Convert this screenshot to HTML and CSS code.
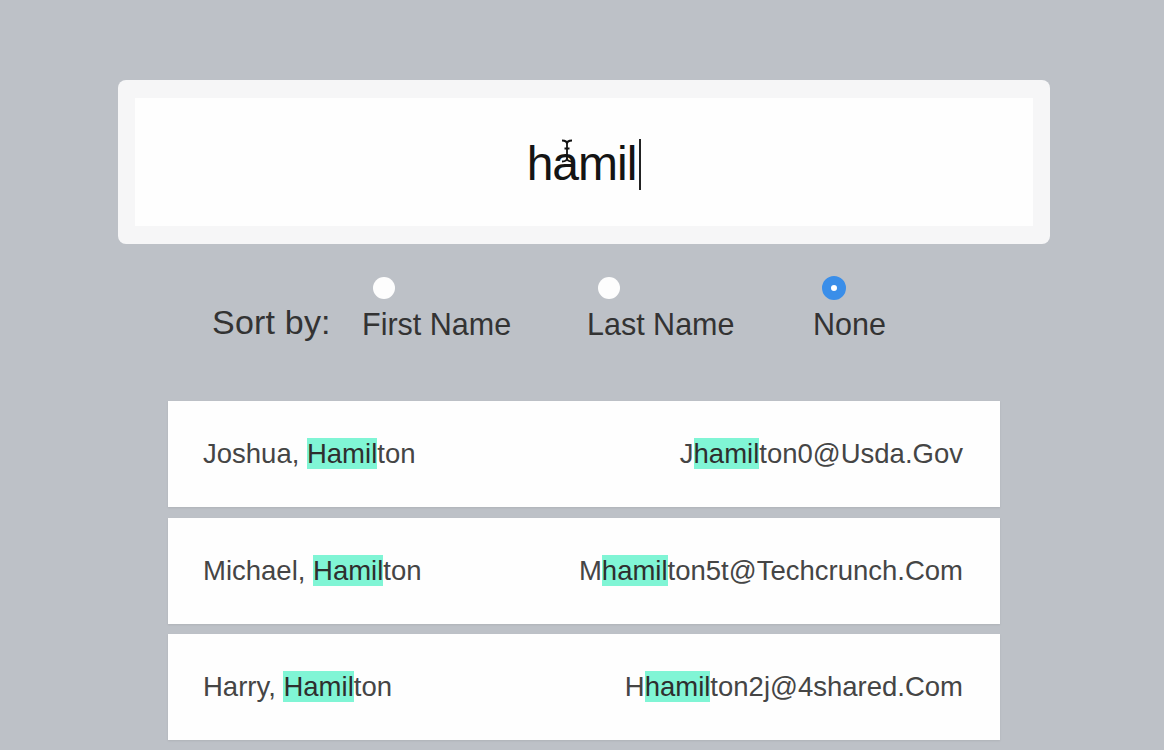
FILE: index.html
```html
<!DOCTYPE html>
<html lang="en">
<head>
<meta charset="utf-8">
<title>Contact search</title>
<link rel="stylesheet" href="styles.css">
</head>
<body>
<div class="page">
  <div class="search-card">
    <div class="search-field">
      <span class="query">hamil</span><span class="caret"></span>
      <svg class="ibeam" width="14" height="24" viewBox="0 0 14 24" aria-hidden="true">
        <path d="M2 1.5 C5 1.5 7 2.8 7 5 C7 2.8 9 1.5 12 1.5 M7 5 V19 M2 22.5 C5 22.5 7 21.2 7 19 C7 21.2 9 22.5 12 22.5 M4.5 9.5 H9.5" fill="none" stroke="#111" stroke-width="1.8"/>
      </svg>
    </div>
  </div>

  <div class="sort-row">
    <div class="sort-label">Sort by:</div>
    <div class="sort-option">
      <span class="radio"></span>
      <span class="option-label">First Name</span>
    </div>
    <div class="sort-option">
      <span class="radio"></span>
      <span class="option-label">Last Name</span>
    </div>
    <div class="sort-option">
      <span class="radio radio-checked"></span>
      <span class="option-label">None</span>
    </div>
  </div>

  <div class="results">
    <div class="result-row">
      <span class="name">Joshua, <mark class="hl">Hamil</mark>ton</span>
      <span class="email">J<mark class="hl">hamil</mark>ton0@Usda.Gov</span>
    </div>
    <div class="result-row">
      <span class="name">Michael, <mark class="hl">Hamil</mark>ton</span>
      <span class="email">M<mark class="hl">hamil</mark>ton5t@Techcrunch.Com</span>
    </div>
    <div class="result-row">
      <span class="name">Harry, <mark class="hl">Hamil</mark>ton</span>
      <span class="email">H<mark class="hl">hamil</mark>ton2j@4shared.Com</span>
    </div>
  </div>
</div>
</body>
</html>
```

FILE: styles.css
```css
html, body {
  margin: 0;
  padding: 0;
}

body {
  background: #bdc1c7;
  font-family: "Liberation Sans", Arial, Helvetica, sans-serif;
  color: #222;
  width: 1164px;
  height: 750px;
  overflow: hidden;
}

.page {
  display: flex;
  flex-direction: column;
  padding-top: 80px;
}

.search-card {
  margin-left: 118px;
  width: 932px;
  height: 164px;
  box-sizing: border-box;
  padding: 18px 17px;
  background: #f6f6f7;
  border-radius: 8px;
}

.search-field {
  position: relative;
  height: 128px;
  background: #fefefe;
  display: flex;
  align-items: center;
  justify-content: center;
}

.query {
  font-size: 48px;
  letter-spacing: -1px;
  color: #141414;
  line-height: 1;
  padding-top: 4px;
}

.caret {
  display: inline-block;
  width: 2px;
  height: 51px;
  background: #222;
  margin-left: 3px;
  margin-top: 4px;
}

.ibeam {
  position: absolute;
  left: 425px;
  top: 41px;
}

.sort-row {
  margin-top: 33px;
  margin-left: 212px;
  display: grid;
  grid-template-columns: 150px 225px 226px auto;
  align-items: end;
  color: #333;
}

.sort-label {
  font-size: 34px;
  line-height: 34px;
  letter-spacing: 0.2px;
}

.sort-option {
  display: flex;
  flex-direction: column;
  align-items: flex-start;
  gap: 10px;
}

.radio {
  display: block;
  width: 22px;
  height: 22px;
  margin-left: 11px;
  border-radius: 50%;
  background: #fdfdfd;
  box-sizing: border-box;
}

.radio-checked {
  width: 24px;
  height: 24px;
  margin-left: 9px;
  margin-bottom: -1px;
  margin-top: -1px;
  background: #fff;
  border: 9px solid #3a8ee9;
}

.option-label {
  font-size: 30.5px;
  line-height: 30px;
}

.results {
  margin-top: 62px;
  margin-left: 168px;
  width: 832px;
  display: flex;
  flex-direction: column;
  gap: 10.5px;
}

.result-row {
  height: 106px;
  box-sizing: border-box;
  padding: 0 37px 0 35px;
  background: #fefefe;
  box-shadow: 0 1px 2px rgba(0, 0, 0, 0.08);
  display: flex;
  align-items: center;
  justify-content: space-between;
  font-size: 27.5px;
  color: #454545;
}

.hl {
  background: #80f5d5;
  color: #2e2e2e;
}
```
